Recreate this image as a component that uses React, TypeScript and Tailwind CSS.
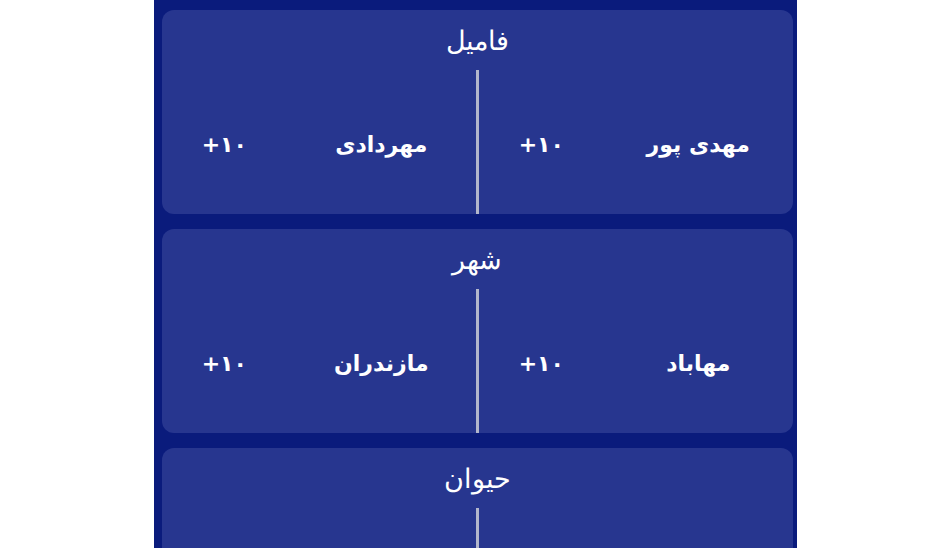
const rounds = [
  {
    title: 'فامیل',
    answers: [
      { name: 'مهدی پور', score: '+۱۰' },
      { name: 'مهردادی', score: '+۱۰' },
    ],
  },
  {
    title: 'شهر',
    answers: [
      { name: 'مهاباد', score: '+۱۰' },
      { name: 'مازندران', score: '+۱۰' },
    ],
  },
  {
    title: 'حیوان',
    answers: [
      { name: '', score: '' },
      { name: '', score: '' },
    ],
  },
];

export default function App() {
  return (
    <div className="min-h-screen bg-white" style={{ fontFamily: '"DejaVu Sans", sans-serif' }}>
      <div dir="rtl" className="mx-auto w-[643px] min-h-screen bg-[#0a1b7c] pt-[10px] pl-2 pr-1 flex flex-col gap-[15px]">
        {rounds.map((r) => (
          <CategoryCard key={r.title} title={r.title} answers={r.answers} />
        ))}
      </div>
    </div>
  );
}

function CategoryCard({
  title,
  answers,
}: {
  title: string;
  answers: { name: string; score: string }[];
}) {
  return (
    <div className="rounded-xl bg-[#27368f] h-[204px] flex flex-col">
      <div className="h-[60px] pt-[3px] flex items-center justify-center text-white text-[27px] font-light">
        {title}
      </div>
      <div className="flex-1 grid grid-cols-[1fr_3px_1fr]">
        <AnswerCell {...answers[0]} />
        <div className="bg-[#b3b7cc]" />
        <AnswerCell {...answers[1]} />
      </div>
    </div>
  );
}

function AnswerCell({ name, score }: { name: string; score: string }) {
  return (
    <div className="grid grid-cols-[3fr_2fr] items-center pt-[5px]">
      <div className="text-center text-white text-[22px] font-bold">{name}</div>
      <div dir="ltr" className="text-center text-white text-[22px] font-semibold">
        {score}
      </div>
    </div>
  );
}
